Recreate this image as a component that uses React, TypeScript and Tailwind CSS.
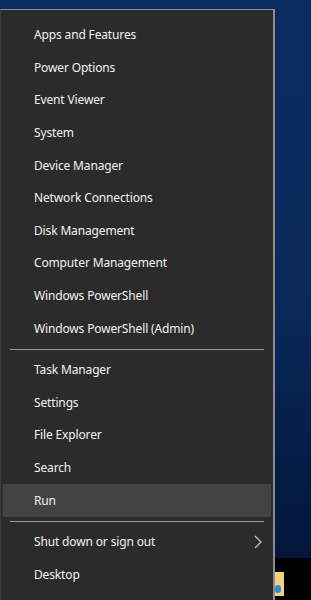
const groups = [
  [
    "Apps and Features",
    "Power Options",
    "Event Viewer",
    "System",
    "Device Manager",
    "Network Connections",
    "Disk Management",
    "Computer Management",
    "Windows PowerShell",
    "Windows PowerShell (Admin)",
  ],
  ["Task Manager", "Settings", "File Explorer", "Search", "Run"],
  ["Shut down or sign out", "Desktop"],
];

function Row({ label }: { label: string }) {
  const hover = label === "Run";
  const sub = label === "Shut down or sign out";
  return (
    <div
      className={`mx-[2px] flex h-[32.6px] items-center justify-between pl-[31px] pr-[8px] ${
        hover ? "bg-[#434343]" : ""
      }`}
    >
      <span className="text-[12px] tracking-[-0.15px] text-[#f2f2f2]">{label}</span>
      {sub && (
        <svg width="8" height="14" viewBox="0 0 8 14" className="mr-[1px]">
          <path d="M1 1 L7 7 L1 13" fill="none" stroke="#c8c8c8" strokeWidth="1.2" />
        </svg>
      )}
    </div>
  );
}

export default function App() {
  return (
    <div
      className="flex h-[600px] w-[311px] flex-col overflow-hidden bg-[#0a2858]"
      style={{ fontFamily: '"Noto Sans", "Open Sans", sans-serif' }}
    >
      <div className="h-[9px] bg-[#0b2c5e]" />
      <div className="flex flex-1">
        <div className="flex w-[275px] flex-col border-t border-r-2 border-l border-[#8c8c8c] border-l-[#3a3a3a] bg-[#2b2b2b] pt-[9px]">
          {groups.map((g, i) => (
            <div key={i}>
              {i > 0 && <div className="mx-[9px] my-[4px] h-px bg-[#9a9a9a]" />}
              {g.map((l) => (
                <Row key={l} label={l} />
              ))}
            </div>
          ))}
        </div>
        <div className="flex flex-1 flex-col">
          <div className="flex-1 bg-gradient-to-b from-[#0a2b5e] via-[#0a2a5c] to-[#03163a]" />
          <div className="flex h-[42px] items-start bg-black pt-[14px]">
            <div className="relative h-[24px] w-[9px] bg-[#f2d27a]">
              <div className="absolute bottom-[3px] left-0 h-[8px] w-[6px] rounded-sm bg-[#2d8fd8]" />
            </div>
          </div>
        </div>
      </div>
    </div>
  );
}
